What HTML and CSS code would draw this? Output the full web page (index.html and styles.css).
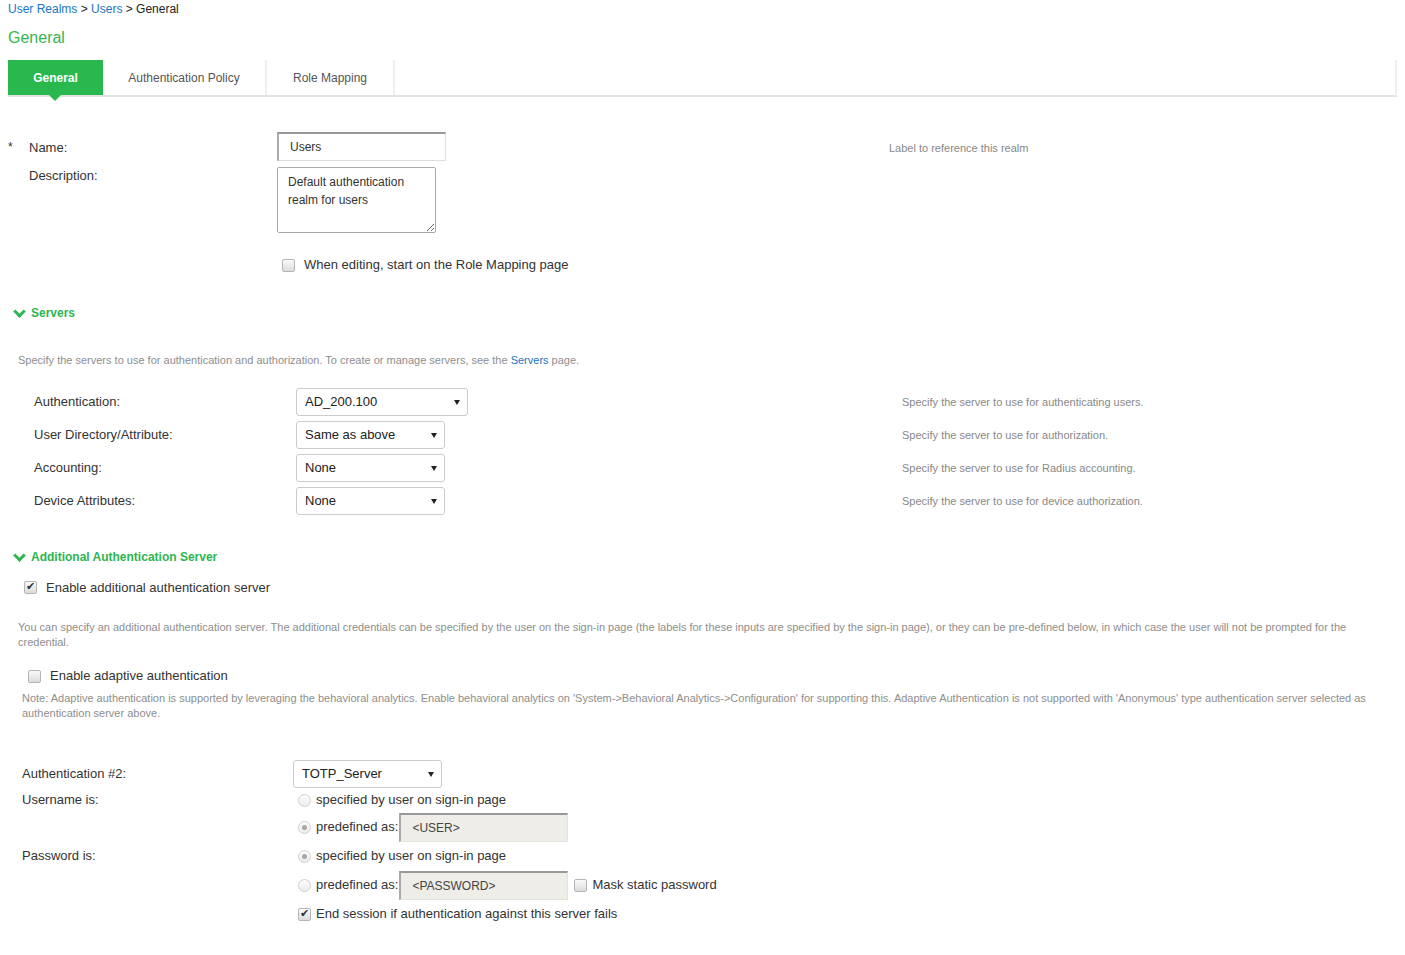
FILE: index.html
```html
<!DOCTYPE html>
<html lang="en">
<head>
    <meta charset="UTF-8">
    <meta name="viewport" content="width=device-width, initial-scale=1.0">
    <title>User Realms - General</title>
    <link rel="stylesheet" href="styles.css">
</head>
<body>
    <div class="crumbs">
        <a href="#">User Realms</a> &gt; <a href="#">Users</a> &gt; General
    </div>
    <h1 class="title">General</h1>

    <nav class="tabs">
        <a class="tab active" href="#">General</a>
        <a class="tab" href="#">Authentication Policy</a>
        <a class="tab" href="#">Role Mapping</a>
    </nav>

    <!-- name / description -->
    <div class="realm">
        <span class="star">*</span>
        <label class="lbl mid" for="name">Name:</label>
        <div><input class="txt" id="name" type="text" value="Users"></div>
        <span class="help mid">Label to reference this realm</span>

        <span></span>
        <label class="lbl top" for="desc">Description:</label>
        <div><textarea class="area" id="desc">Default authentication realm for users</textarea></div>
        <span></span>
    </div>
    <div class="start">
        <label class="chk"><input type="checkbox"> When editing, start on the Role Mapping page</label>
    </div>

    <!-- servers -->
    <h2 class="sect"><span class="chev"></span>Servers</h2>
    <p class="note first">Specify the servers to use for authentication and authorization. To create or manage servers, see the <a href="#">Servers</a> page.</p>

    <div class="servers">
        <span class="lbl">Authentication:</span>
        <div><span class="sel wide"><select><option>AD_200.100</option></select></span></div>
        <span class="help">Specify the server to use for authenticating users.</span>

        <span class="lbl">User Directory/Attribute:</span>
        <div><span class="sel"><select><option>Same as above</option></select></span></div>
        <span class="help">Specify the server to use for authorization.</span>

        <span class="lbl">Accounting:</span>
        <div><span class="sel"><select><option>None</option></select></span></div>
        <span class="help">Specify the server to use for Radius accounting.</span>

        <span class="lbl">Device Attributes:</span>
        <div><span class="sel"><select><option>None</option></select></span></div>
        <span class="help">Specify the server to use for device authorization.</span>
    </div>

    <!-- additional auth server -->
    <h2 class="sect extra"><span class="chev"></span>Additional Authentication Server</h2>
    <div class="enable">
        <label class="chk"><input type="checkbox" checked> Enable additional authentication server</label>
    </div>
    <p class="note para">You can specify an additional authentication server. The additional credentials can be specified by the user on the sign-in page (the labels for these inputs are specified by the sign-in page), or they can be pre-defined below, in which case the user will not be prompted for the credential.</p>
    <div class="adaptive">
        <label class="chk"><input type="checkbox"> Enable adaptive authentication</label>
    </div>
    <p class="note adnote">Note: Adaptive authentication is supported by leveraging the behavioral analytics. Enable behavioral analytics on 'System-&gt;Behavioral Analytics-&gt;Configuration' for supporting this. Adaptive Authentication is not supported with 'Anonymous' type authentication server selected as authentication server above.</p>

    <div class="second">
        <span class="lbl">Authentication #2:</span>
        <div><span class="sel"><select><option>TOTP_Server</option></select></span></div>

        <span class="lbl">Username is:</span>
        <div class="opt"><label class="chk"><input type="radio" name="user"> specified by user on sign-in page</label></div>

        <span></span>
        <div class="opt"><label class="chk"><input type="radio" name="user" checked> predefined as:</label><input class="fixed" type="text" value="&lt;USER&gt;"></div>

        <span class="lbl">Password is:</span>
        <div class="opt"><label class="chk"><input type="radio" name="pass" checked> specified by user on sign-in page</label></div>

        <span></span>
        <div class="opt"><label class="chk"><input type="radio" name="pass"> predefined as:</label><input class="fixed" type="text" value="&lt;PASSWORD&gt;"><label class="chk mask"><input type="checkbox"> Mask static password</label></div>

        <span></span>
        <div class="opt"><label class="chk"><input type="checkbox" checked> End session if authentication against this server fails</label></div>
    </div>
</body>
</html>
```

FILE: styles.css
```css
/* page */
body{
    margin: 0;
    padding: 0 8px;
    font-family: "Liberation Sans", Arial, sans-serif;
    color: #333;
    background: #fff;
}
a{color: #1b75c4; text-decoration: none;}
.crumbs{
    font-size: 12px;
    line-height: 16px;
    margin-top: 1px;
    color: #222;
}
.title{
    margin: 11px 0 0;
    font-size: 16px;
    line-height: 20px;
    font-weight: normal;
    color: #35b552;
}
/* tabs */
.tabs{
    display: flex;
    height: 35px;
    margin-top: 12px;
    border-bottom: 2px solid #e2e2e2;
    border-right: 2px solid #efefef;
}
.tab{
    position: relative;
    display: flex;
    align-items: center;
    justify-content: center;
    font-size: 12px;
    color: #555;
    border-right: 2px solid #efefef;
}
.tab:nth-child(2){width: 162px;}
.tab:nth-child(3){width: 126px;}
.tab.active{
    width: 95px;
    background: #28b84d;
    color: #fff;
    font-weight: bold;
    border-right: none;
}
.tab.active::after{ /* small arrow under the active tab */
    content: "";
    position: absolute;
    left: 41px;
    bottom: -6px;
    border: 6px solid transparent;
    border-top-color: #28b84d;
    border-bottom: 0;
}
/* shared labels and help text */
.lbl{
    font-size: 13px;
    line-height: 16px;
    color: #333;
}
.help{
    font-size: 11px;
    color: #888;
}
.mid{align-self: center; margin-top: 3px;}
.top{align-self: start; margin-top: 1px;}
.note{
    margin: 0;
    font-size: 11px;
    line-height: 15px;
    color: #8e8e8e;
}
/* realm name + description */
.realm{
    display: grid;
    grid-template-columns: 21px 248px 612px auto;
    row-gap: 6px;
    margin-top: 35px;
}
.star{font-size: 12px; align-self: center; color: #333;}
.txt{
    box-sizing: border-box;
    width: 169px;
    height: 29px;
    padding: 0 11px;
    border: 1px solid #ddd;
    border-top: 2px solid #999;
    border-left: 2px solid #aaa;
    font: 12px "Liberation Sans", Arial, sans-serif;
    color: #333;
}
.area{
    box-sizing: border-box;
    display: block;
    width: 159px;
    height: 66px;
    padding: 5px 10px;
    border: 1px solid #a9a9a9;
    border-radius: 2px;
    font: 12px/18px "Liberation Sans", Arial, sans-serif;
    color: #333;
}
.start{margin: 24px 0 0 274px;}
/* checkbox + radio look */
.chk{
    display: inline-flex;
    align-items: center;
    gap: 9px;
    font-size: 13px;
    line-height: 16px;
    color: #333;
}
.chk input{
    appearance: none;
    -webkit-appearance: none;
    position: relative;
    box-sizing: border-box;
    width: 13px;
    height: 13px;
    margin: 0;
    border: 1px solid #b5b5b5;
    border-radius: 2px;
    background: linear-gradient(#fafafa, #dcdcdc);
}
.chk input:checked::after{
    content: "✔";
    position: absolute;
    left: 1px;
    top: -2px;
    font-size: 11px;
    color: #333;
}
.chk input[type=radio]{
    border-radius: 50%;
    border-color: #d0d0d0;
    background: linear-gradient(#fdfdfd, #ececec);
}
.chk input[type=radio]:checked::after{
    content: "";
    left: 3px;
    top: 3px;
    width: 5px;
    height: 5px;
    border-radius: 50%;
    background: #a8a8a8;
}
/* section headings */
.sect{
    display: flex;
    align-items: center;
    gap: 6px;
    margin: 29px 0 0 6px;
    font-size: 12px;
    line-height: 16px;
    color: #2db54f;
}
.chev{
    width: 6px;
    height: 6px;
    margin: 0 1px 3px 1px;
    border-right: 3px solid #2db54f;
    border-bottom: 3px solid #2db54f;
    transform: rotate(45deg);
}
.note.first{margin: 31px 0 0 10px; line-height: 16px;}
/* server rows */
.servers{
    display: grid;
    grid-template-columns: 262px 606px auto;
    grid-auto-rows: 28px;
    row-gap: 5px;
    align-items: center;
    margin: 20px 0 0 26px;
}
.sel{
    position: relative;
    display: inline-block;
}
.sel select{
    appearance: none;
    -webkit-appearance: none;
    box-sizing: border-box;
    width: 149px;
    height: 28px;
    padding: 0 20px 0 8px;
    border: 1px solid #ccc;
    border-radius: 3px;
    background: #fff;
    font: 13px "Liberation Sans", Arial, sans-serif;
    color: #222;
}
.sel.wide select{width: 172px;}
.sel::after{
    content: "";
    position: absolute;
    right: 8px;
    top: 12px;
    border: 3px solid transparent;
    border-top: 5px solid #222;
    border-bottom: 0;
    pointer-events: none;
}
.sect.extra{margin-top: 34px;}
.enable{margin: 15px 0 0 16px;}
.note.para{margin: 22px 0 0 10px;}
.adaptive{margin: 18px 0 0 20px;}
.note.adnote{margin: 4px 0 0 14px;}
/* authentication #2 */
.second{
    display: grid;
    grid-template-columns: 271px auto;
    grid-template-rows: 28px 25px;
    grid-auto-rows: 29px;
    align-items: center;
    margin: 39px 0 0 14px;
}
.opt{display: flex; align-items: center; padding-left: 5px;}
.opt .chk{gap: 5px;}
.fixed{
    box-sizing: border-box;
    width: 169px;
    height: 29px;
    margin-left: 1px;
    padding: 0 11px;
    border: 1px solid #e4e2dc;
    border-top: 2px solid #999;
    border-left: 2px solid #aaa;
    background: #efede8;
    font: 12px "Liberation Sans", Arial, sans-serif;
    color: #444;
}
.chk.mask{margin-left: 6px; gap: 5px;}
```
